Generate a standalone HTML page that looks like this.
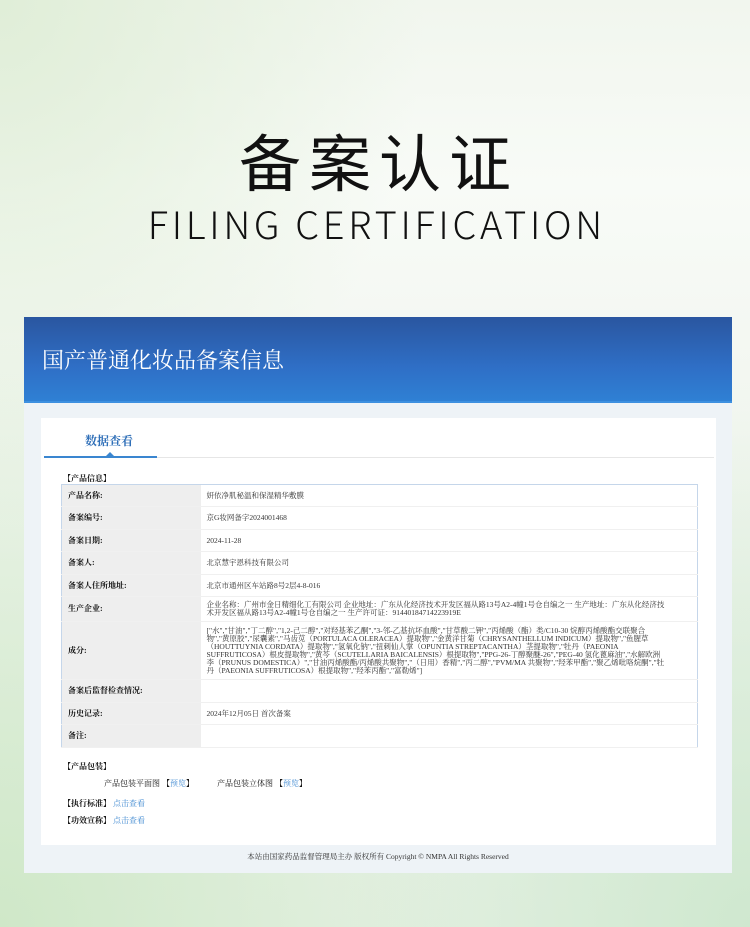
<!DOCTYPE html>
<html><head><meta charset="utf-8"><style>
*{margin:0;padding:0;box-sizing:border-box}
body{width:750px;height:927px;overflow:hidden;font-family:"Liberation Serif","Noto Serif CJK SC",serif;background:linear-gradient(180deg,#f1f6ee 0%,#f8fbf7 20%,#f3f7f1 40%,#e6f1e4 100%);position:relative}
.bg1{position:absolute;left:0;top:0;width:750px;height:927px;background:radial-gradient(ellipse at 0% 100%,#cfe8c8 0%,rgba(207,232,200,0) 45%),radial-gradient(ellipse at 100% 100%,#cfe8cf 0%,rgba(207,232,200,0) 40%),radial-gradient(ellipse at 0% 0%,#e0eed8 0%,rgba(255,255,255,0) 40%)}
.t1{position:absolute;top:116px;left:0;width:750px;text-align:center;font-family:"Noto Sans CJK SC",sans-serif;font-size:62px;letter-spacing:8px;color:#111;line-height:86px;padding-left:8px}
.t2{position:absolute;top:201px;left:0;width:750px;text-align:center;font-family:"Noto Sans CJK SC",sans-serif;font-size:38px;font-weight:300;letter-spacing:3.7px;color:#111;line-height:44px;padding-left:3.7px}
.card{position:absolute;left:24px;top:317px;width:708px;height:556px;background:#eef3f7}
.hd{height:86px;background:linear-gradient(180deg,#2a56a0 0%,#2f6fc6 60%,#2f80d4 100%);border-bottom:2px solid #3d90e0;color:#fff;font-size:22px;padding:27px 0 0 18px;font-family:"Noto Serif CJK SC",serif}
.panel{position:absolute;left:17px;top:101px;width:675px;height:427px;background:#fff}
.tab{position:absolute;left:44px;top:14px;font-size:12px;color:#2f6fb8;font-weight:bold}
.tabline{position:absolute;left:3px;top:38px;width:113px;height:2px;background:#3a86d0}
.tabline2{position:absolute;left:116px;top:39px;width:557px;height:1px;background:#e6e6e6}
.tri{position:absolute;left:65px;top:34px;border:4px solid transparent;border-bottom-color:#3a86d0;border-top:0}
.sec{position:absolute;font-size:8px;font-weight:bold;color:#111}
table{position:absolute;left:20px;top:66px;width:637px;border-collapse:collapse;border:1px solid #c5d6ea;font-size:7.5px;color:#333}
td{border-bottom:1px solid #f0f0f0;vertical-align:middle;line-height:8px}
td.l{width:139px;background:#eeeeee;font-weight:bold;padding-left:6px;color:#111;font-size:8px}
td.v{padding-left:6px;padding-right:30px}
.lk{color:#3a86d0}
.foot{position:absolute;left:0;top:528px;width:708px;height:28px;text-align:center;font-size:7.5px;color:#333;padding-top:6px}
</style></head><body>
<div class="bg1"></div>
<div class="t1">备案认证</div>
<div class="t2">FILING CERTIFICATION</div>
<div class="card">
<div class="hd">国产普通化妆品备案信息</div>
<div class="panel">
<div class="tab">数据查看</div>
<div class="tabline"></div><div class="tabline2"></div><div class="tri"></div>
<div class="sec" style="left:22px;top:55px">【产品信息】</div>
<table>
<tr style="height:22px"><td class="l">产品名称:</td><td class="v">妍依净肌秘温和保湿精华敷膜</td></tr>
<tr style="height:23px"><td class="l">备案编号:</td><td class="v">京G妆网备字2024001468</td></tr>
<tr style="height:22px"><td class="l">备案日期:</td><td class="v">2024-11-28</td></tr>
<tr style="height:23px"><td class="l">备案人:</td><td class="v">北京慧宇恩科技有限公司</td></tr>
<tr style="height:22px"><td class="l">备案人住所地址:</td><td class="v">北京市通州区车站路8号2层4-8-016</td></tr>
<tr style="height:25px"><td class="l">生产企业:</td><td class="v">企业名称：广州市金日精细化工有限公司 企业地址：广东从化经济技术开发区福从路13号A2-4幢1号仓自编之一 生产地址：广东从化经济技术开发区福从路13号A2-4幢1号仓自编之一 生产许可证：91440184714223919E</td></tr>
<tr style="height:58px"><td class="l">成分:</td><td class="v">["水","甘油","丁二醇","1,2-己二醇","对羟基苯乙酮","3-邻-乙基抗坏血酸","甘草酸二钾","丙烯酸（酯）类/C10-30 烷醇丙烯酸酯交联聚合物","黄原胶","尿囊素","马齿苋（PORTULACA OLERACEA）提取物","金黄洋甘菊（CHRYSANTHELLUM INDICUM）提取物","鱼腥草（HOUTTUYNIA CORDATA）提取物","氢氧化钠","扭刺仙人掌（OPUNTIA STREPTACANTHA）茎提取物","牡丹（PAEONIA SUFFRUTICOSA）根皮提取物","黄芩（SCUTELLARIA BAICALENSIS）根提取物","PPG-26-丁醇聚醚-26","PEG-40 氢化蓖麻油","水解欧洲李（PRUNUS DOMESTICA）","甘油丙烯酸酯/丙烯酸共聚物","（日用）香精","丙二醇","PVM/MA 共聚物","羟苯甲酯","聚乙烯吡咯烷酮","牡丹（PAEONIA SUFFRUTICOSA）根提取物","羟苯丙酯","富勒烯"]</td></tr>
<tr style="height:23px"><td class="l">备案后监督检查情况:</td><td class="v"></td></tr>
<tr style="height:22px"><td class="l">历史记录:</td><td class="v">2024年12月05日 首次备案</td></tr>
<tr style="height:23px"><td class="l">备注:</td><td class="v"></td></tr>
</table>
<div class="sec" style="left:22px;top:343px">【产品包装】</div>
<div class="sec" style="left:63px;top:360px;font-weight:normal">产品包装平面图 <b>【<span class="lk" style="font-weight:normal">预览</span>】</b></div>
<div class="sec" style="left:176px;top:360px;font-weight:normal">产品包装立体图 <b>【<span class="lk" style="font-weight:normal">预览</span>】</b></div>
<div class="sec" style="left:22px;top:380px">【执行标准】 <span class="lk" style="font-weight:normal">点击查看</span></div>
<div class="sec" style="left:22px;top:397px">【功效宣称】 <span class="lk" style="font-weight:normal">点击查看</span></div>
</div>
<div class="foot">本站由国家药品监督管理局主办 版权所有 Copyright © NMPA All Rights Reserved</div>
</div>
</body></html>
